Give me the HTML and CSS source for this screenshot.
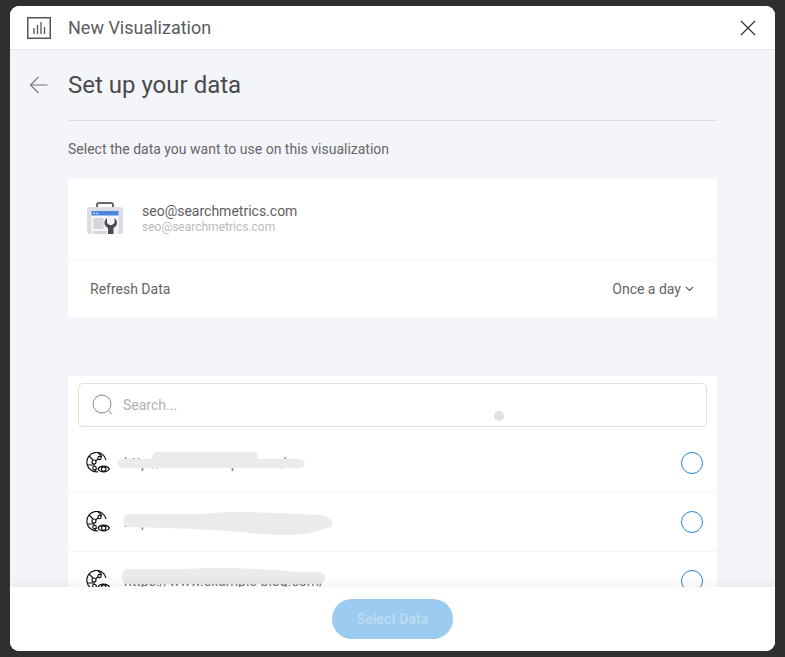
FILE: index.html
```html
<!DOCTYPE html>
<html lang="en">
<head>
<meta charset="utf-8">
<title>New Visualization</title>
<link rel="stylesheet" href="styles.css">
</head>
<body>
<div class="modal">
  <header class="modal-header">
    <svg class="viz-icon" width="24" height="22" viewBox="0 0 24 22" fill="none" stroke="#555">
      <rect x="0.75" y="0.75" width="22.5" height="20.500" stroke-width="1.5"/>
      <path d="M7 11v6M10.500 8v9M14 5v12M17.500 10v7" stroke-width="1.3"/>
    </svg>
    <span class="modal-title">New Visualization</span>
    <svg class="close-icon" width="16" height="16" viewBox="0 0 16 16" fill="none" stroke="#333" stroke-width="1.2">
      <path d="M1 1l14 14M15 1L1 15"/>
    </svg>
  </header>
  <main class="modal-body">
    <svg class="back-icon" width="20" height="18" viewBox="0 0 20 18" fill="none" stroke="#777" stroke-width="1.1">
      <path d="M18.500 9H1.500M9.500 1L1.500 9l8 8"/>
    </svg>
    <div class="content">
      <h1 class="page-title">Set up your data</h1>
      <p class="subtitle">Select the data you want to use on this visualization</p>
      <section class="panel account-panel">
        <div class="account-row">
          <svg class="console-icon" width="37" height="33" viewBox="0 0 37 33">
            <path d="M10 6V3a2 2 0 0 1 2-2h12a2 2 0 0 1 2 2v3" fill="none" stroke="#666" stroke-width="2"/>
            <path d="M3 5h30a3 3 0 0 1 3 3v21a3 3 0 0 1-3 3H3a3 3 0 0 1-3-3V8a3 3 0 0 1 3-3z" fill="#dcdde0"/>
            <rect x="4.500" y="9" width="27" height="23" fill="#f2f5fc"/>
            <rect x="4.500" y="9" width="27" height="4.500" fill="#4a86e0"/>
            <rect x="6.500" y="10.700" width="1.500" height="1.200" fill="#fff"/>
            <rect x="9.500" y="10.700" width="1.500" height="1.200" fill="#fff"/>
            <rect x="6.500" y="16" width="10" height="11" fill="#d4d5d8"/>
            <rect x="6.500" y="29" width="13" height="3" fill="#d4d5d8"/>
            <path d="M20 16c-3 2-3.500 7-.5 9l1.500 1v6h5.500v-6l1.500-1c3-2 2.500-7-.5-9v5l-2.500 2h-2.500l-2.500-2z" fill="#4d4d4f"/>
          </svg>
          <div class="account-text">
            <div class="account-name">seo@searchmetrics.com</div>
            <div class="account-mail">seo@searchmetrics.com</div>
          </div>
        </div>
        <div class="refresh-row">
          <span>Refresh Data</span>
          <span class="refresh-value">Once a day
            <svg class="chevron" width="9" height="6" viewBox="0 0 9 6" fill="none" stroke="#555" stroke-width="1.1"><path d="M.8.8l3.700 3.700L8.200.8"/></svg>
          </span>
        </div>
      </section>
      <section class="panel list-panel">
        <div class="search-box">
          <svg class="search-icon" width="21" height="22" viewBox="0 0 21 22" fill="none" stroke="#888" stroke-width="1">
            <circle cx="10" cy="10" r="9"/>
            <path d="M16.500 16.500l3.500 4"/>
          </svg>
          <span class="search-placeholder">Search...</span>
        </div>
        <div class="site-row first-row">
          <svg class="site-icon" width="24" height="22"><use href="#site-glyph"/></svg>
          <span class="site-url url-a">http://www.example.com/</span>
          <svg class="blot blot-a" width="190" height="18" viewBox="0 0 190 18"><path d="M6 8h30V6a5 5 0 0 1 5-5h96a5 5 0 0 1 5 5v2h42a4.500 4.500 0 0 1 0 9H6a4.500 4.500 0 0 1 0-9z"/></svg>
          <span class="radio"></span>
        </div>
        <div class="site-row">
          <svg class="site-icon" width="24" height="22"><use href="#site-glyph"/></svg>
          <span class="site-url url-b">http</span>
          <svg class="blot blot-b" width="210" height="26" viewBox="0 0 210 26"><path d="M5 2h70l30-2c30 0 60 1 90 3 6 0 8 1 10 3 6 2 6 8 0 10-5 0-8 3-15 4-10 3-30 4-50 2-40-4-80-6-135-7C-1 15-1 3 5 2z"/></svg>
          <span class="radio"></span>
        </div>
        <div class="site-row">
          <svg class="site-icon" width="24" height="22"><use href="#site-glyph"/></svg>
          <span class="site-url url-c">https://www.example-blog.com/</span>
          <svg class="blot blot-c" width="203" height="17" viewBox="0 0 203 17"><path d="M5 1h60c30-2 70-1 110 3h22a5.500 5.500 0 0 1 0 12H5C-2 16-2 2 5 1z"/></svg>
          <span class="radio"></span>
        </div>
      </section>
    </div>
    <span class="cursor-dot"></span>
  </main>
  <footer class="modal-footer">
    <button class="select-btn" type="button">Select Data</button>
  </footer>
</div>
<svg class="glyph-defs" width="0" height="0">
  <symbol id="site-glyph" viewBox="0 0 24 22">
    <g fill="none" stroke="#111" stroke-width="1.150">
      <path d="M12 19.700A9.700 9.700 0 1 1 20 8"/>
      <path d="M3 4l4 4M1 13l6 0M12 1c3 2 3.500 3 3.500 4M9.500 9l2.500-2M8 12v2.500M10.500 17l-2 2.500"/>
      <circle cx="8" cy="10" r="2"/>
      <circle cx="8.500" cy="16" r="1.800"/>
      <circle cx="13.500" cy="6" r="1.600"/>
      <path d="M12 17c2-3.800 9-3.800 11.500 0-2.500 3.800-9.500 3.800-11.500 0z"/>
      <circle cx="17.700" cy="17" r="2.200"/>
    </g>
  </symbol>
</svg>
</body>
</html>
```
FILE: styles.css
```css
* { box-sizing: border-box; }
html, body { height: 100%; margin: 0; }
body {
  background: #2f2f2f;
  padding: 6px 10px;
  font-family: Roboto, "Liberation Sans", sans-serif;
  overflow: hidden;
}
.modal {
  width: 765px;
  height: 645px;
  background: #f4f5fa;
  border-radius: 9px;
  overflow: hidden;
  display: flex;
  flex-direction: column;
}
.modal-header {
  flex: none;
  height: 44px;
  background: #fff;
  border-bottom: 1px solid #e4e5e8;
  display: flex;
  align-items: center;
  padding: 0 19px 0 17px;
}
.viz-icon { flex: none; }
.modal-title {
  margin-left: 17px;
  font-size: 18px;
  color: #5c5c5c;
  flex: 1;
}
.modal-body {
  flex: 1;
  min-height: 0;
  display: flex;
  position: relative;
  overflow: hidden;
  padding-left: 20px;
}
.back-icon { flex: none; margin-top: 26px; margin-left: -1px; margin-right: 1px; }
.content {
  width: 649px;
  margin-left: 18px;
  flex: none;
}
.page-title {
  margin: 0;
  height: 71px;
  padding-top: 19px;
  font-size: 24px;
  line-height: 32px;
  font-weight: 400;
  color: #4a4a4a;
  border-bottom: 1px solid #dcdde2;
}
.subtitle {
  margin: 0;
  height: 58px;
  padding-top: 20px;
  font-size: 14px;
  line-height: 17px;
  color: #666;
}
.panel { background: #fff; }
.account-panel { height: 138px; margin-bottom: 59px; }
.account-row {
  height: 81px;
  border-bottom: 1px solid #f3f3f5;
  display: flex;
  align-items: center;
  padding-left: 19px;
}
.console-icon { flex: none; margin-top: -1px; }
.account-text { margin-left: 18px; margin-top: -2px; }
.account-name { font-size: 14px; line-height: 17px; color: #5f5f5f; }
.account-mail { font-size: 12px; line-height: 14px; color: #bbb; }
.refresh-row {
  height: 57px;
  display: flex;
  align-items: center;
  justify-content: space-between;
  padding: 0 23px 0 22px;
  font-size: 14px;
  color: #666;
}
.refresh-value { display: flex; align-items: center; gap: 4px; padding-top: 1px; }
.list-panel { padding-top: 7px; height: 260px; overflow: hidden; }
.search-box {
  margin: 0 10px;
  height: 44px;
  border: 1px solid #dedfe2;
  border-radius: 5px;
  display: flex;
  align-items: center;
  padding-left: 13px;
}
.search-icon { flex: none; }
.search-placeholder { margin-left: 10px; font-size: 14px; color: #b0b0b0; }
.site-row {
  height: 59px;
  display: flex;
  align-items: center;
  position: relative;
  padding: 0 14px 0 18px;
  border-bottom: 1px solid #f3f3f5;
}
.first-row { height: 66px; padding-top: 6px; }
.site-icon { flex: none; }
.site-url {
  margin-left: 14px;
  font-size: 14px;
  color: #777;
  flex: 1;
}
.blot { position: absolute; fill: #ebebeb; }
.blot-a { left: 48px; top: 24px; }
.blot-b { left: 55px; top: 19px; }
.blot-c { left: 54px; top: 16px; }
.radio {
  flex: none;
  width: 22px;
  height: 22px;
  border: 1.5px solid #1f88d9;
  border-radius: 50%;
}
.cursor-dot {
  position: absolute;
  left: 484px;
  top: 361px;
  width: 10px;
  height: 10px;
  background: #e0e0e0;
  border-radius: 50%;
}
.modal-footer {
  flex: none;
  height: 64px;
  background: #fff;
  box-shadow: 0 -4px 10px rgba(0, 0, 0, 0.05);
  position: relative;
  display: flex;
  justify-content: center;
  padding-top: 12px;
}
.select-btn {
  width: 121px;
  height: 40px;
  border: 0;
  border-radius: 20px;
  background: #9bcbee;
  color: #bddcf4;
  font-family: inherit;
  font-size: 14px;
  font-weight: 500;
}
.glyph-defs { position: absolute; }
```
